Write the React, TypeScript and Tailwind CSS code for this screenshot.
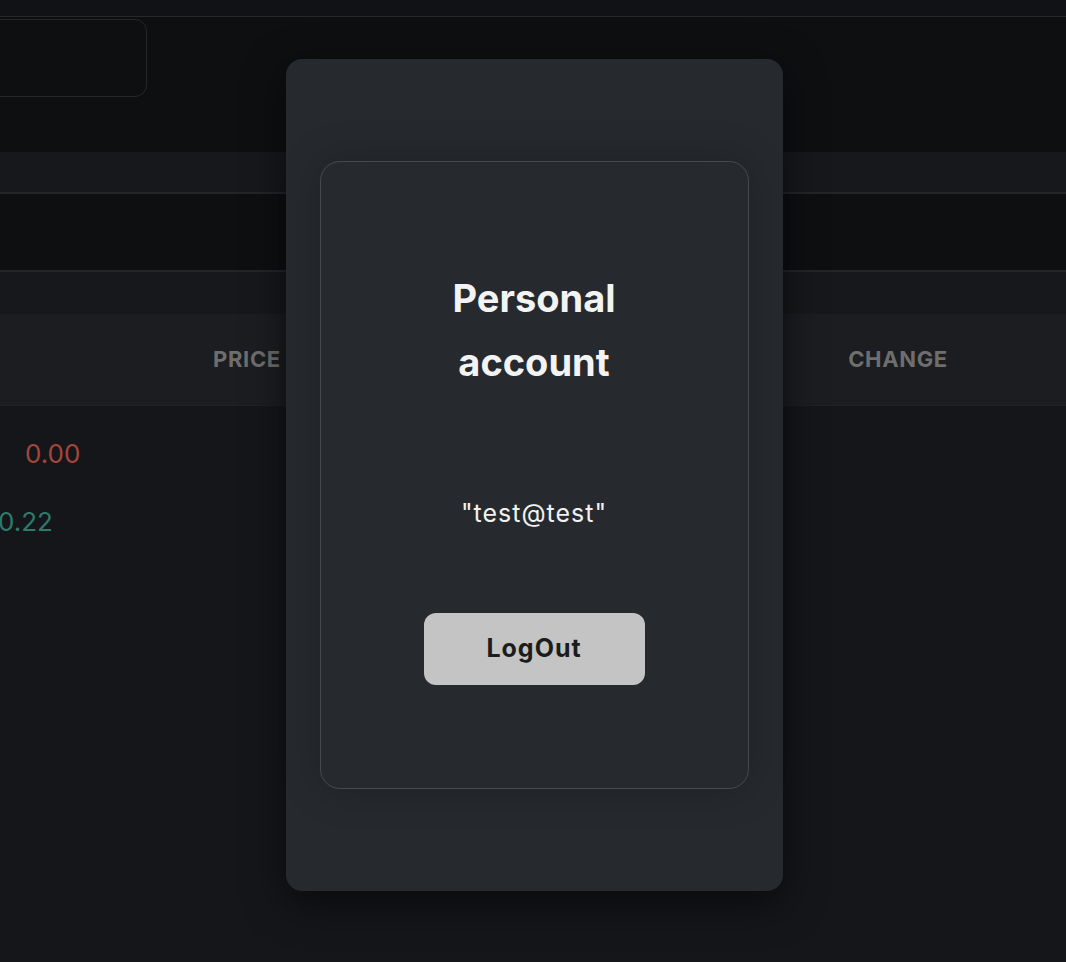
const rows = [
  { value: "0.00", color: "text-[#a4463b]", offset: "pl-[25px]" },
  { value: "-0.22", color: "text-[#2f7a6c]", offset: "-ml-[14px]" },
];

function Background() {
  return (
    <div className="flex flex-col min-h-[962px] bg-[#15161a]">
      <div className="h-[17px] bg-[#111215] border-b border-[#26282b]" />
      <div className="h-[135px] bg-[#0e0f11] pt-[2px]">
        <div className="w-[167px] h-[78px] -ml-[20px] rounded-xl border border-[#25272a]" />
      </div>
      <div className="h-[42px] bg-[#17181b] border-b-2 border-[#232528]" />
      <div className="h-[78px] bg-[#0e0f11] border-b-2 border-[#232528]" />
      <div className="h-[42px] bg-[#17181b]" />
      <div className="h-[92px] bg-[#1b1d20] border-b border-[#1f2124] flex items-center text-[22px] tracking-[0.03em] font-bold text-[#6e6e6e] uppercase">
        <div className="w-[494px] text-center">Price</div>
        <div className="w-[314px]" />
        <div className="w-[180px] text-center">Change</div>
      </div>
      <div className="flex flex-col pt-[28px]">
        {rows.map((r) => (
          <div key={r.value} className={`h-[68px] text-[26px] ${r.color} ${r.offset}`}>
            {r.value}
          </div>
        ))}
      </div>
    </div>
  );
}

function AccountModal() {
  return (
    <div className="absolute inset-0 flex justify-center items-start pt-[59px] pl-[2px]">
      <div className="w-[497px] h-[832px] rounded-2xl bg-[#262a2e] shadow-[0_12px_40px_rgba(0,0,0,0.55)] px-[34px] pt-[102px]">
        <div className="h-[628px] rounded-[20px] border border-[#464a4f] shadow-[0_0_40px_rgba(0,0,0,0.22)] flex flex-col items-center pt-[104px]">
          <h1 className="w-[200px] text-center text-[38px] leading-[64px] font-bold text-[#f3f3f3]">
            Personal account
          </h1>
          <p className="mt-[103px] text-[25px] leading-[32px] tracking-[0.04em] text-[#f1f1f1]">"test@test"</p>
          <button className="mt-[84px] w-[221px] h-[72px] rounded-xl bg-[#c4c4c4] text-[25px] tracking-[0.04em] font-bold text-[#1c1c1c]">
            LogOut
          </button>
        </div>
      </div>
    </div>
  );
}

export default function App() {
  return (
    <div className="relative overflow-hidden w-full h-[962px] font-['Inter','Liberation_Sans',sans-serif]">
      <Background />
      <AccountModal />
    </div>
  );
}
